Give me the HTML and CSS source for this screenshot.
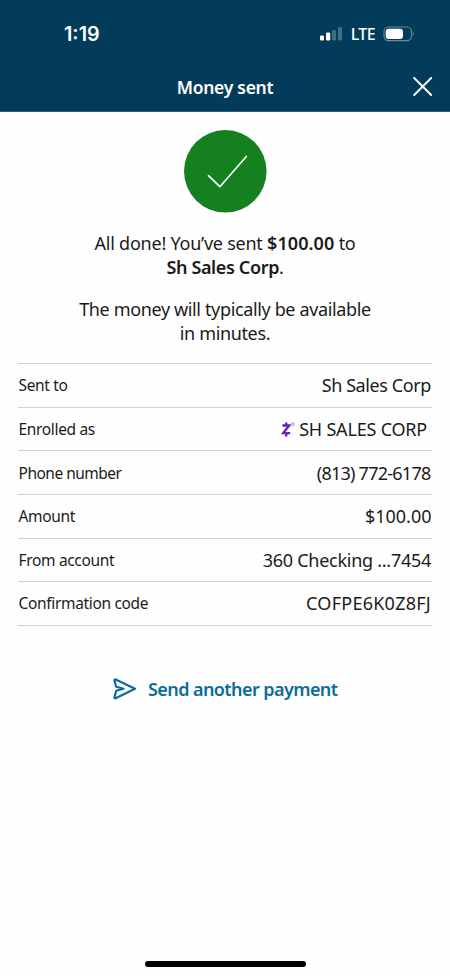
FILE: index.html
```html
<!DOCTYPE html>
<html lang="en">
<head>
<meta charset="utf-8">
<title>Money sent</title>
<link rel="stylesheet" href="styles.css">
</head>
<body>
<div class="screen">
  <header class="top">
    <div class="status">
      <span class="time">1:19</span>
      <div class="indicators">
        <svg class="signal" width="24" height="16" viewBox="0 0 24 16" fill="#fff">
          <rect x="1" y="9.5" width="4" height="5" rx="1.2"/>
          <rect x="7" y="6.5" width="4.2" height="8" rx="1.2"/>
          <rect x="13" y="4" width="4" height="10.5" rx="1.2" opacity=".25"/>
          <rect x="19" y="1" width="4" height="13.5" rx="1.2" opacity=".25"/>
        </svg>
        <span class="lte">LTE</span>
        <svg class="battery" width="32" height="16" viewBox="0 0 32 16">
          <rect x="1" y="1" width="27.5" height="13.6" rx="4.6" fill="none" stroke="#fff" stroke-opacity=".42" stroke-width="1.1"/>
          <rect x="2.7" y="2.7" width="17.3" height="10.2" rx="3" fill="#fff"/>
          <path d="M29.9 5.6q1.7 2.2 0 4.4z" fill="#fff" fill-opacity=".5"/>
        </svg>
      </div>
    </div>
    <div class="titlebar">
      <h1 class="title">Money sent</h1>
      <svg class="close" width="20" height="20" viewBox="0 0 20 20" stroke="#fff" stroke-width="1.9" stroke-linecap="round"><path d="M1.2 1l17 17M18.2 1l-17 17"/></svg>
    </div>
  </header>
  <main class="content">
    <svg class="done" width="84" height="84" viewBox="0 0 84 84">
      <circle cx="42.3" cy="42.3" r="41.3" fill="#148020"/>
      <path d="M25.5 46.6L36.9 57.7L63.3 27.5" fill="none" stroke="#fff" stroke-width="1.7" stroke-linecap="round" stroke-linejoin="round"/>
    </svg>
    <p class="message"><span class="sent">All done! You’ve sent </span><b class="sum">$100.00</b> to<br><b>Sh Sales Corp</b>.</p>
    <p class="message">The money will typically be available<br>in minutes.</p>
    <dl class="details">
      <div class="row"><dt>Sent to</dt><dd class="name">Sh Sales Corp</dd></div>
      <div class="row"><dt>Enrolled as</dt><dd class="enrolled"><svg class="zelle" width="14" height="17" viewBox="0 0 14 17"><path d="M1.4 4.5H8.2L2.2 12.1H9.2M5.2 1.4v3M5.2 12.3v3.1" fill="none" stroke="#6721bd" stroke-width="2.4"/><circle cx="11.8" cy="3.2" r="1.7" fill="#d9c5ec" stroke="#bb9bdd" stroke-width=".6"/></svg>SH SALES CORP</dd></div>
      <div class="row"><dt class="tight">Phone number</dt><dd class="phone">(813) 772-6178</dd></div>
      <div class="row"><dt>Amount</dt><dd class="amount">$100.00</dd></div>
      <div class="row"><dt>From account</dt><dd class="account">360 Checking ...7454</dd></div>
      <div class="row"><dt>Confirmation code</dt><dd class="code">COFPE6K0Z8FJ</dd></div>
    </dl>
    <a class="again">
      <svg width="24" height="22" viewBox="0 0 24 22" fill="none" stroke="#0b6c9c" stroke-width="2.2" stroke-linejoin="round" stroke-linecap="round"><path d="M2.7 1.6L22 10.7L2.7 20.2Q1.3 20.6 1.5 19.2L3.2 12.8L10.6 10.8L3.2 8.8L1.5 2.6Q1.4 1.1 2.7 1.6z"/></svg>
      <span>Send another payment</span>
    </a>
  </main>
  <div class="home"></div>
</div>
</body>
</html>
```
FILE: styles.css
```css
* { box-sizing: border-box; }
body { margin: 0; background: #fefefe; color: #1b1b1b; font-family: "Noto Sans", "Open Sans", sans-serif; }
.screen { width: 450px; height: 976px; display: flex; flex-direction: column; align-items: center; overflow: hidden; }
.top { width: 100%; height: 112px; background: #033c5a; color: #fff; border-bottom: 1px solid #2d6079; }
.status { height: 64px; padding: 4px 35px 0 64px; display: flex; align-items: center; justify-content: space-between; }
.time { font: 600 19.8px/24px Inter, sans-serif; }
.indicators { display: flex; align-items: center; }
.lte { font-size: 16px; line-height: 20px; font-weight: 500; letter-spacing: -.6px; margin: 0 8px 0 7.5px; }
.titlebar { height: 46px; display: grid; grid-template-columns: 1fr auto 1fr; align-items: center; padding: 0 17px; }
.title { grid-column: 2; margin: 0; font-size: 17.5px; line-height: 24px; font-weight: 600; letter-spacing: -.27px; }
.close { justify-self: end; }
.content { width: 414px; flex: 1; display: flex; flex-direction: column; align-items: center; padding-top: 17px; }
.done { margin-bottom: 19px; }
.message { margin: 0 0 18.5px; text-align: center; font-size: 18px; line-height: 23.8px; letter-spacing: -.36px; white-space: nowrap; }
.message + .message { margin-bottom: 17.5px; }
.message b { font-weight: 600; }
.sent { letter-spacing: -.24px; }
.message .sum { letter-spacing: .08px; }
.details { width: 100%; margin: 0; border-top: 1px solid #d3d3d3; }
.row { height: 43.6px; border-bottom: 1px solid #d3d3d3; display: flex; align-items: center; justify-content: space-between; white-space: nowrap; }
dt { font-size: 15.5px; line-height: 24px; letter-spacing: -.33px; padding-left: .5px; }
.tight { letter-spacing: -.5px; }
dd { margin: 0; font-size: 18px; line-height: 24px; }
.name { letter-spacing: -.4px; padding-right: 1px; }
.enrolled { display: flex; align-items: center; padding-right: 5px; letter-spacing: -.2px; }
.zelle { margin-right: 4px; }
.phone { letter-spacing: -.75px; padding-right: 1.5px; }
.amount { padding-right: .5px; }
.account { letter-spacing: -.27px; padding-right: 1px; }
.code { letter-spacing: .25px; padding-right: 1px; }
.again { margin-top: 51.5px; display: flex; align-items: center; gap: 11.5px; color: #0b6c9c; font-size: 18px; line-height: 24px; font-weight: 600; letter-spacing: -.58px; white-space: nowrap; }
.home { width: 161px; height: 6px; border-radius: 3px; background: #000; margin-bottom: 9px; }
```
